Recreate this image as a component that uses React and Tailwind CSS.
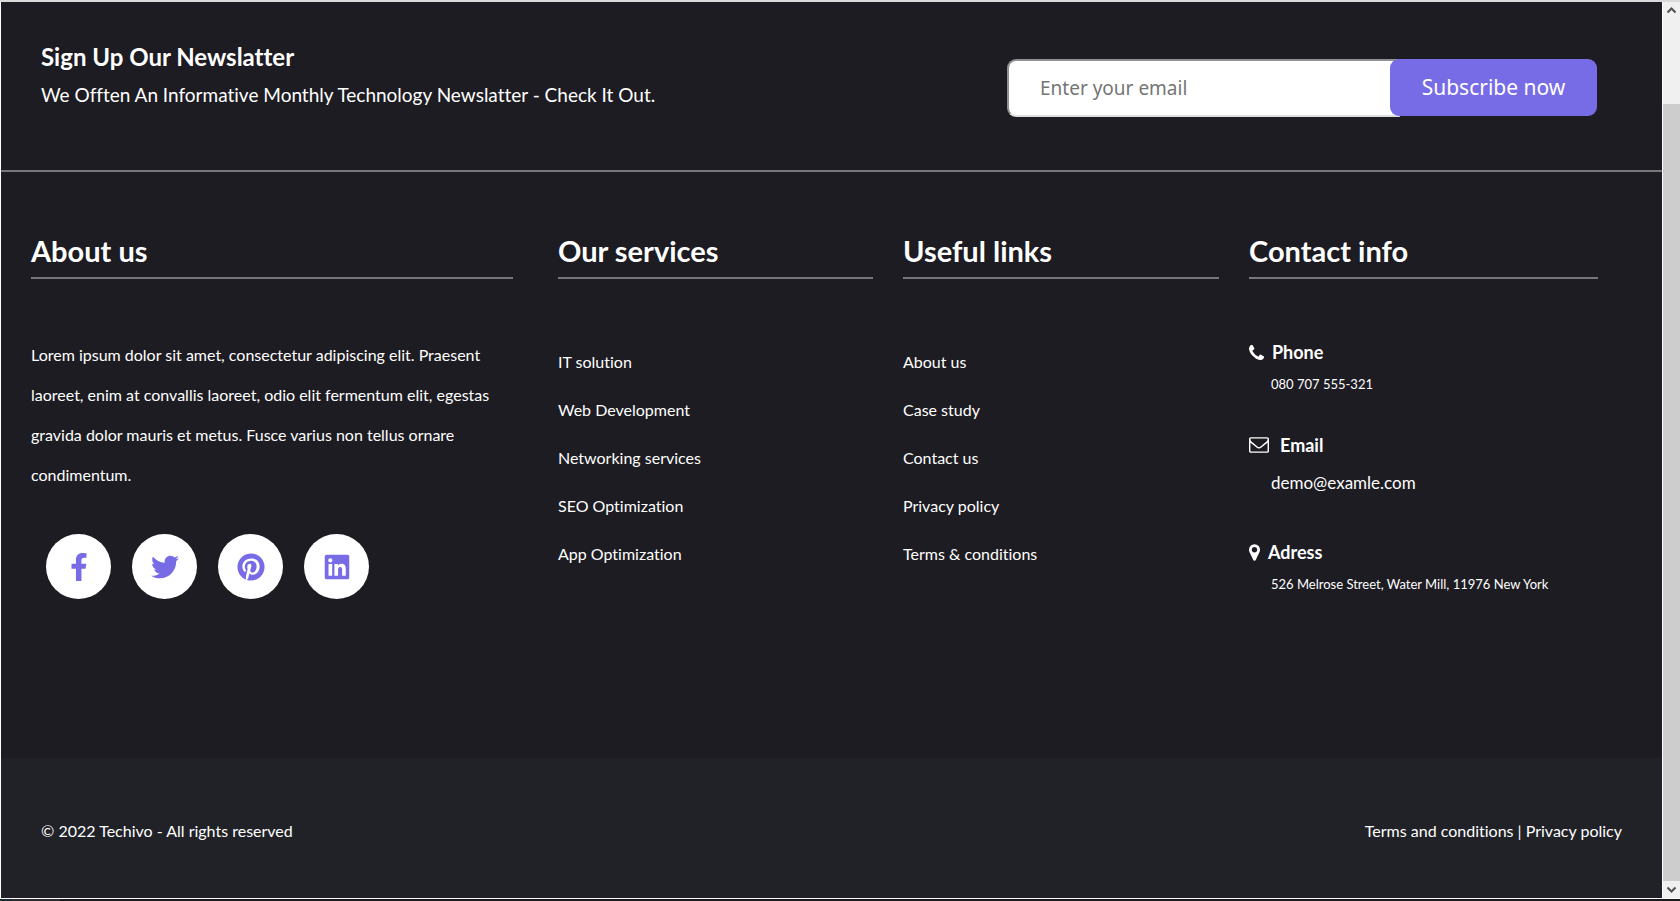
import { FaFacebookF, FaTwitter, FaPinterest, FaLinkedin } from "react-icons/fa";

const services = ["IT solution", "Web Development", "Networking services", "SEO Optimization", "App Optimization"];
const links = ["About us", "Case study", "Contact us", "Privacy policy", "Terms & conditions"];
const socials = [
  { name: "Facebook", icon: <FaFacebookF className="size-7" /> },
  { name: "Twitter", icon: <FaTwitter className="size-7" /> },
  { name: "Pinterest", icon: <FaPinterest className="size-7" /> },
  { name: "LinkedIn", icon: <FaLinkedin className="size-7" /> },
];

function PhoneIcon() {
  return (
    <svg viewBox="0 0 1408 1408" className="size-[15px]" fill="currentColor" aria-hidden="true">
      <g transform="translate(0 1408) scale(1 -1)">
        <path d="M1408 296q0 -27 -10 -70.5t-21 -68.5q-21 -50 -122 -106q-94 -51 -186 -51q-27 0 -53 3.5t-57.5 12.5t-47 14.5t-55.5 20.5t-49 18q-98 35 -175 83q-127 79 -264 216t-216 264q-48 77 -83 175q-3 9 -18 49t-20.5 55.5t-14.5 47t-12.5 57.5t-3.5 53q0 92 51 186q56 101 106 122q25 11 68.5 21t70.5 10q14 0 21 -3q18 -6 53 -76q11 -19 30 -54t35 -63.5t31 -53.5q3 -4 17.5 -25t21.5 -35.5t7 -28.5q0 -20 -28.5 -50t-62 -55t-62 -53t-28.5 -46q0 -9 5 -22.5t8.5 -20.5t14 -24t11.5 -19q76 -137 174 -235t235 -174q2 -1 19 -11.5t24 -14t20.5 -8.5t22.5 -5q18 0 46 28.5t53 62t55 62t50 28.5q14 0 28.5 -7t35.5 -21.5t25 -17.5q25 -15 53.5 -31t63.5 -35t54 -30q70 -35 76 -53q3 -7 3 -21z" />
      </g>
    </svg>
  );
}

function EnvelopeIcon() {
  return (
    <svg viewBox="0 0 1792 1408" className="w-5 h-4" fill="currentColor" aria-hidden="true">
      <g transform="translate(0 1280) scale(1 -1)">
        <path d="M1664 32v768q-32 -36 -69 -66q-268 -206 -426 -338q-51 -43 -83 -67t-86.5 -48.5t-102.5 -24.5h-1h-1q-48 0 -102.5 24.5t-86.5 48.5t-83 67q-158 132 -426 338q-37 30 -69 66v-768q0 -13 9.5 -22.5t22.5 -9.5h1472q13 0 22.5 9.5t9.5 22.5zM1664 1083v11v13.5t-.5 13t-3 12.5t-5.5 9t-9 7.5t-14 2.5h-1472q-13 0 -22.5 -9.5t-9.5 -22.5q0 -168 147 -284q193 -152 401 -317q6 -5 35 -29.5t46 -37.5t44.5 -31.5t50.5 -27.5t43 -9h1h1q20 0 43 9t50.5 27.5t44.5 31.5t46 37.5t35 29.5q208 165 401 317q54 43 100.5 115.5t46.5 131.5zM1792 1120v-1088q0 -66 -47 -113t-113 -47h-1472q-66 0 -113 47t-47 113v1088q0 66 47 113t113 47h1472q66 0 113 -47t47 -113z" />
      </g>
    </svg>
  );
}

function MarkerIcon() {
  return (
    <svg viewBox="0 0 1024 1536" className="w-[11px] h-[17px]" fill="currentColor" aria-hidden="true">
      <g transform="translate(0 1408) scale(1 -1)">
        <path d="M768 896q0 106 -75 181t-181 75t-181 -75t-75 -181t75 -181t181 -75t181 75t75 181zM1024 896q0 -109 -33 -179l-364 -774q-16 -33 -47.5 -52t-67.5 -19t-67.5 19t-46.5 52l-365 774q-33 70 -33 179q0 212 150 362t362 150t362 -150t150 -362z" />
      </g>
    </svg>
  );
}

function Heading({ children }) {
  return (
    <h2 className="border-b-2 border-[#77767a] pb-1.5 text-[29px] leading-10 font-bold">{children}</h2>
  );
}

function LinkColumn({ title, items }) {
  return (
    <nav className="pr-[30px]" aria-label={title}>
      <Heading>{title}</Heading>
      <ul className="pt-[59px]">
        {items.map((item) => (
          <li key={item} className="h-12 leading-12">
            <a href="#">{item}</a>
          </li>
        ))}
      </ul>
    </nav>
  );
}

function Chevron({ d }) {
  return (
    <svg viewBox="0 0 17 17" className="block size-[17px]" fill="none" stroke="#505050" strokeWidth="2" aria-hidden="true">
      <path d={d} />
    </svg>
  );
}

function ScrollRail() {
  return (
    <div className="flex w-[18px] shrink-0 flex-col border-l border-white bg-[#f0f0f0]">
      <Chevron d="M4.5 10.5 L8.5 6.5 L12.5 10.5" />
      <div className="mt-[85px] flex-1 bg-[#cdcdcd]" />
      <Chevron d="M4.5 6.5 L8.5 10.5 L12.5 6.5" />
    </div>
  );
}

export default function App() {
  return (
    <div className="flex min-h-screen flex-col bg-[#1a1a1b] font-[Lato,sans-serif] text-[16px] text-white [font-variant-ligatures:none]">
      <div className="flex flex-1 border-t-2 border-b border-t-[#d9dadc] border-b-white">
        <footer className="flex min-w-0 flex-1 flex-col border-l border-white bg-[#1d1c22]">
          <section className="flex items-start justify-between border-b-2 border-[#77767a] pt-[35px] pr-[65px] pb-[53px] pl-10">
            <div>
              <h1 className="text-[24px] leading-10 font-bold">Sign Up Our Newslatter</h1>
              <p className="text-[19px] leading-9">We Offten An Informative Monthly Technology Newslatter - Check It Out.</p>
            </div>
            <form className="mt-[22px] flex items-start font-['Noto_Sans',sans-serif]" onSubmit={(e) => e.preventDefault()}>
              <input
                type="email"
                aria-label="Email address"
                placeholder="Enter your email"
                className="-mr-2.5 h-[58px] w-[393px] rounded-l-[9px] border-2 border-t-[#8f8f94] border-r-white border-b-[#dedede] border-l-[#8f8f94] bg-white px-[31px] text-[19px] text-black outline-none placeholder:text-[#757575]"
              />
              <button type="submit" className="h-[57px] w-[207px] rounded-[9px] bg-[#776ce5] text-[21px]">Subscribe now</button>
            </form>
          </section>

          <section className="grid flex-1 grid-cols-[527fr_345fr_346fr_349fr] pt-[59px] pr-16 pb-[120px] pl-[30px]">
            <div className="pr-[45px]">
              <Heading>About us</Heading>
              <p className="pt-14 leading-10">
                Lorem ipsum dolor sit amet, consectetur adipiscing elit. Praesent laoreet, enim at convallis laoreet,
                odio elit fermentum elit, egestas gravida dolor mauris et metus. Fusce varius non tellus ornare
                condimentum.
              </p>
              <ul className="flex gap-[21px] pt-[39px] pl-[15px] text-[#776ce5]">
                {socials.map((s) => (
                  <li key={s.name}>
                    <a href="#" aria-label={s.name} className="flex size-[65px] items-center justify-center rounded-full bg-white">
                      {s.icon}
                    </a>
                  </li>
                ))}
              </ul>
            </div>
            <LinkColumn title="Our services" items={services} />
            <LinkColumn title="Useful links" items={links} />
            <div>
              <Heading>Contact info</Heading>
              <address className="pt-[55px] not-italic">
                <h3 className="flex items-center gap-2 text-[18px] leading-9 font-bold"><PhoneIcon />Phone</h3>
                <p className="pl-[22px] text-[13px] leading-7">080 707 555-321</p>
                <h3 className="mt-[27px] flex items-center gap-[11px] text-[18px] leading-10 font-bold"><EnvelopeIcon />Email</h3>
                <p className="pl-[22px] text-[17px] leading-9"><a href="mailto:demo@examle.com">demo@examle.com</a></p>
                <h3 className="mt-[33px] flex items-center gap-2 text-[18px] leading-9 font-bold"><MarkerIcon />Adress</h3>
                <p className="pl-[22px] text-[13px] leading-7">526 Melrose Street, Water Mill, 11976 New York</p>
              </address>
            </div>
          </section>

          <section className="flex items-center justify-between bg-[#212227] pt-[53px] pr-10 pb-[47px] pl-10 leading-10">
            <p>© 2022 Techivo - All rights reserved</p>
            <p><a href="#">Terms and conditions</a> | <a href="#">Privacy policy</a></p>
          </section>
        </footer>
        <ScrollRail />
      </div>
      <div className="flex h-0.5">
        <div className="w-3 bg-[#1b2b33]" />
        <div className="w-12 bg-[#2d2d2e]" />
      </div>
    </div>
  );
}
